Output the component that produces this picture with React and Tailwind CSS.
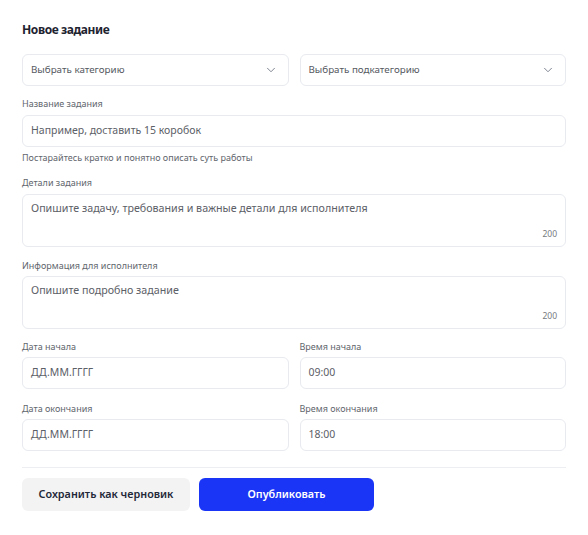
import React from "react";
import { FiChevronDown } from "react-icons/fi";

const font = { fontFamily: '"Noto Sans", "Open Sans", sans-serif' };

const Label = ({ children, className = "" }) => (
  <div className={`text-[9px] leading-[12px] text-[#62666d] ${className}`}>{children}</div>
);

const Field = ({ placeholder }) => (
  <div className="h-8 rounded-md border border-[#e8eaef] bg-white px-2 flex items-center text-[10.5px] text-[#5c6067]">
    {placeholder}
  </div>
);

const Select = ({ placeholder }) => (
  <div className="h-8 rounded-md border border-[#e8eaef] bg-white pl-2 pr-2.5 flex items-center justify-between text-[9.8px] text-[#55595f]">
    <span>{placeholder}</span>
    <FiChevronDown size={14} className="text-[#6b7280]" strokeWidth={1.5} />
  </div>
);

const Area = ({ placeholder }) => (
  <div className="relative h-[53px] rounded-md border border-[#e8eaef] bg-white px-2 pt-[5px] text-[10.7px] leading-[16px] text-[#5c6067]">
    {placeholder}
    <span className="absolute right-2 bottom-[4px] text-[8.5px] text-[#767a80]">200</span>
  </div>
);

export default function App() {
  return (
    <div className="min-h-screen bg-white px-[22px] pt-[22px]" style={font}>
      <h2 className="text-[12px] leading-[16px] font-bold tracking-[-0.4px] text-[#1e2330]">Новое задание</h2>

      {/* Categories */}
      <div className="mt-[16px] grid grid-cols-2 gap-[11px]">
        <Select placeholder="Выбрать категорию" />
        <Select placeholder="Выбрать подкатегорию" />
      </div>

      {/* Title */}
      <Label className="mt-[12px] mb-[5px]">Название задания</Label>
      <Field placeholder="Например, доставить 15 коробок" />
      <Label className="mt-[5px]">Постарайтесь кратко и понятно описать суть работы</Label>

      {/* Details */}
      <Label className="mt-[13px] mb-[5px]">Детали задания</Label>
      <Area placeholder="Опишите задачу, требования и важные детали для исполнителя" />

      <Label className="mt-[13px] mb-[4px]">Информация для исполнителя</Label>
      <Area placeholder="Опишите подробно задание" />

      {/* Dates */}
      <div className="mt-[12px] grid grid-cols-2 gap-x-[11px]">
        <div>
          <Label className="mb-[4px]">Дата начала</Label>
          <Field placeholder="ДД.ММ.ГГГГ" />
        </div>
        <div>
          <Label className="mb-[4px]">Время начала</Label>
          <Field placeholder="09:00" />
        </div>
        <div className="mt-[14px]">
          <Label className="mb-[4px]">Дата окончания</Label>
          <Field placeholder="ДД.ММ.ГГГГ" />
        </div>
        <div className="mt-[14px]">
          <Label className="mb-[4px]">Время окончания</Label>
          <Field placeholder="18:00" />
        </div>
      </div>

      <div className="mt-[16px] border-t border-[#eceef2]" />

      {/* Actions */}
      <div className="mt-[10px] flex gap-[9px]">
        <button className="h-[33px] w-[168px] rounded-md bg-[#f3f3f4] text-[10.8px] font-semibold text-[#232838]">
          Сохранить как черновик
        </button>
        <button className="h-[33px] w-[175px] rounded-md bg-[#1a35f5] text-[10.8px] font-semibold text-white">
          Опубликовать
        </button>
      </div>
    </div>
  );
}
